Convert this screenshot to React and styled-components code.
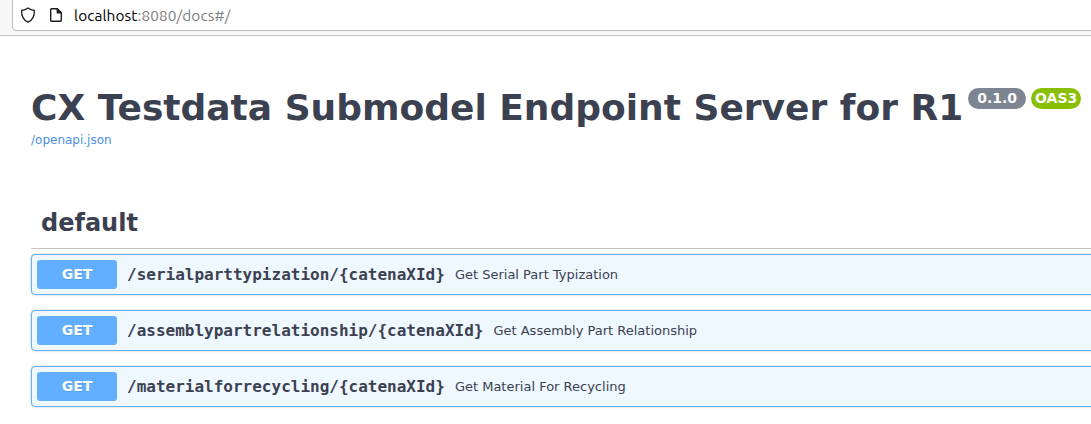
import React from 'react';
import styled, { createGlobalStyle } from 'styled-components';

const GlobalStyle = createGlobalStyle`
  * { box-sizing: border-box; }
  body {
    margin: 0;
    background: #fff;
    color: #3b4151;
    font-family: "DejaVu Sans", sans-serif;
    overflow: hidden;
  }
`;

const Page = styled.div`
  width: 100%;
  height: 424px;
  overflow: hidden;
`;

const BrowserBar = styled.header`
  height: 36px;
  padding-left: 12px;
  background: #f7f7f7;
  border-bottom: 1px solid #c4c4c4;
  overflow: hidden;
`;

const AddressField = styled.div`
  display: flex;
  align-items: center;
  height: 36px;
  margin: -5px -10px 0 0;
  padding-left: 7px;
  background: #fff;
  border: 1px solid #bcbcbc;
  border-radius: 4px;
`;

const BarIcon = styled.svg`
  flex: none;
  width: 16px;
  height: 16px;
  margin-top: 3px;
  margin-right: 12px;
`;

const Address = styled.span`
  margin-top: 5px;
  margin-left: -2px;
  font: 15.4px/20px Ubuntu, "Noto Sans", sans-serif;
  letter-spacing: 0.1px;
  color: #808080;
  white-space: nowrap;
`;

const Host = styled.span`
  color: #000;
`;

const Content = styled.main`
  width: 1400px;
  padding: 51px 0 0 31px;
`;

const Title = styled.h1`
  display: flex;
  align-items: flex-start;
  margin: 0;
  font-size: 36px;
  line-height: 42px;
  font-weight: 700;
  white-space: nowrap;
`;

const Badge = styled.span`
  width: ${(p) => p.$width};
  height: 21px;
  margin: 1px 0 0 5px;
  border-radius: 57px;
  background: ${(p) => p.$color};
  color: #fff;
  font-size: 14px;
  line-height: 20px;
  text-align: center;
`;

const SpecLink = styled.a`
  display: block;
  margin-top: 4px;
  font-size: 12px;
  line-height: 14px;
  color: #4990e2;
  text-decoration: none;
`;

const SectionTitle = styled.h2`
  margin: 48px 0 5px;
  padding: 12px 10px 0;
  height: 54px;
  border-bottom: 1px solid rgba(59, 65, 81, 0.3);
  font-size: 24px;
  line-height: 32px;
`;

const Operation = styled.div`
  display: flex;
  align-items: center;
  height: 41px;
  margin-bottom: 15px;
  padding: 5px;
  border: 1px solid #61affe;
  border-radius: 4px;
  background: #eff7ff;
  box-shadow: 0 0 3px rgba(0, 0, 0, 0.19);
`;

const Method = styled.span`
  width: 80px;
  height: 29px;
  border-radius: 3px;
  background: #61affe;
  color: #fff;
  font-size: 14px;
  font-weight: 700;
  line-height: 28px;
  text-align: center;
  text-shadow: 0 1px 0 rgba(0, 0, 0, 0.1);
`;

const Path = styled.span`
  padding: 0 10px;
  font: 700 16px/19px "DejaVu Sans Mono", monospace;
`;

const Summary = styled.span`
  font-size: 13px;
  line-height: 16px;
`;

const operations = [
  ['/serialparttypization/{catenaXId}', 'Get Serial Part Typization'],
  ['/assemblypartrelationship/{catenaXId}', 'Get Assembly Part Relationship'],
  ['/materialforrecycling/{catenaXId}', 'Get Material For Recycling'],
];

export default function App() {
  return (
    <Page>
      <GlobalStyle />
      <BrowserBar>
        <AddressField>
          <BarIcon viewBox="0 0 16 16" fill="none" stroke="#1c1b22" strokeWidth="1.3" strokeLinejoin="round">
            <path d="M8 .9C9.600 2.200 12 3.100 14.400 3.400 14.600 9 12.600 13.100 8 15.100 3.400 13.100 1.400 9 1.600 3.400 4 3.100 6.400 2.200 8 .9Z" />
          </BarIcon>
          <BarIcon viewBox="0 0 16 16" fill="none" stroke="#1c1b22" strokeWidth="1.4" strokeLinejoin="round">
            <path d="M3.700 1.700H9L13.300 5.700V13.300a1 1 0 0 1-1 1H3.700a1 1 0 0 1-1-1V2.700a1 1 0 0 1 1-1Z" />
            <path d="M9.300 1.700V5.700H13.300Z" fill="#1c1b22" />
          </BarIcon>
          <Address>
            <Host>localhost</Host>:8080/docs#/
          </Address>
        </AddressField>
      </BrowserBar>
      <Content>
        <Title>
          CX Testdata Submodel Endpoint Server for R1
          <Badge $color="#7d8492" $width="58px">0.1.0</Badge>
          <Badge $color="#89bf04" $width="50px">OAS3</Badge>
        </Title>
        <SpecLink>/openapi.json</SpecLink>
        <SectionTitle>default</SectionTitle>
        {operations.map(([path, summary]) => (
          <Operation key={path}>
            <Method>GET</Method>
            <Path>{path}</Path>
            <Summary>{summary}</Summary>
          </Operation>
        ))}
      </Content>
    </Page>
  );
}
